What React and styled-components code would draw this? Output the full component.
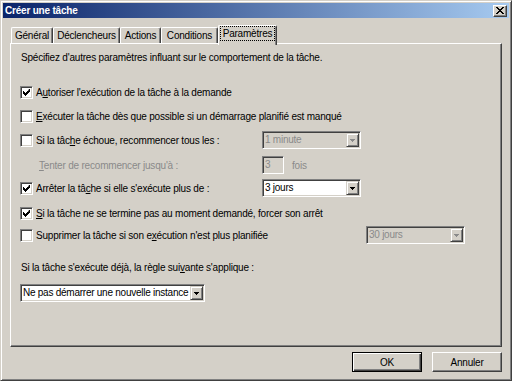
import React from "react";
import styled, { createGlobalStyle } from "styled-components";

const GlobalStyle = createGlobalStyle`
  html, body {
    margin: 0;
    padding: 0;
    background: #d4d0c8;
  }
  body {
    font-family: "Liberation Sans", Arial, sans-serif;
    font-size: 10px;
    letter-spacing: -0.2px;
    color: #000;
  }
`;

const Window = styled.div`
  box-sizing: border-box;
  width: 512px;
  height: 381px;
  display: flex;
  flex-direction: column;
  background: #d4d0c8;
  border: 1px solid;
  border-color: #d4d0c8 #404040 #404040 #d4d0c8;
  box-shadow: inset 1px 1px #fff, inset -1px -1px #808080;
  padding: 2px;
`;

const TitleBar = styled.div`
  height: 15px;
  flex: none;
  display: flex;
  align-items: center;
  justify-content: space-between;
  padding: 0 2px 0 2px;
  background: linear-gradient(to right, #0a246a, #a6caf0);
`;

const Title = styled.span`
  color: #fff;
  font-weight: bold;
`;

const CloseButton = styled.span`
  box-sizing: border-box;
  width: 14px;
  height: 12px;
  display: flex;
  align-items: center;
  justify-content: center;
  background: #d4d0c8;
  border: 1px solid;
  border-color: #fff #404040 #404040 #fff;
  box-shadow: inset -1px -1px #808080;
`;

const Body = styled.div`
  flex: 1;
  display: flex;
  flex-direction: column;
  padding: 7px 7px 0 7px;
`;

const TabStrip = styled.div`
  height: 18px;
  display: flex;
  align-items: flex-end;
  padding-left: 1px;
`;

const Tab = styled.div`
  box-sizing: border-box;
  width: ${(p) => p.$w}px;
  height: ${(p) => (p.$active ? 20 : 16)}px;
  margin-bottom: ${(p) => (p.$active ? -2 : 0)}px;
  position: relative;
  z-index: ${(p) => (p.$active ? 1 : 0)};
  display: flex;
  align-items: ${(p) => (p.$active ? "flex-start" : "center")};
  justify-content: center;
  padding: ${(p) => (p.$active ? "0 1px 4px 1px" : "0")};
  background: #d4d0c8;
  border-top: 1px solid #fff;
  border-left: 1px solid #fff;
  border-right: 1px solid #404040;
  border-radius: 2px 2px 0 0;
  box-shadow: inset -1px 0 #808080;
  white-space: nowrap;
`;

const TabLabel = styled.span`
  box-sizing: border-box;
  flex: 1;
  height: 15px;
  display: flex;
  align-items: center;
  justify-content: center;
  border: 1px dotted #000;
`;

const Panel = styled.div`
  box-sizing: border-box;
  height: 304px;
  display: flex;
  flex-direction: column;
  border: 1px solid;
  border-color: #fff #404040 #404040 #fff;
  box-shadow: inset -1px -1px #808080;
  padding: 3px 0 0 9px;
`;

const Row = styled.div`
  display: flex;
  align-items: center;
  height: 20px;
  flex: none;
  margin-top: ${(p) => p.$mt || 0}px;
  padding-left: ${(p) => p.$indent || 0}px;
  white-space: nowrap;
`;

const Text = styled.span`
  color: ${(p) => (p.$disabled ? "#8a8a8a" : "#000")};
  margin-left: ${(p) => p.$ml || 0}px;
`;

const Label = styled.span`
  flex: none;
  width: ${(p) => (p.$w ? `${p.$w}px` : "auto")};
  color: ${(p) => (p.$disabled ? "#8a8a8a" : "#000")};
`;

const U = styled.span`
  text-decoration: underline;
`;

const Box = styled.span`
  box-sizing: border-box;
  width: 13px;
  height: 13px;
  flex: none;
  margin-right: 3px;
  display: flex;
  align-items: center;
  justify-content: center;
  background: #fff;
  border: 1px solid;
  border-color: #808080 #fff #fff #808080;
  box-shadow: inset 1px 1px #404040, inset -1px -1px #d4d0c8;
`;

const Field = styled.div`
  box-sizing: border-box;
  width: ${(p) => p.$w}px;
  height: 18px;
  flex: none;
  display: flex;
  align-items: stretch;
  padding: 1px;
  background: ${(p) => (p.$disabled ? "#d4d0c8" : "#fff")};
  color: ${(p) => (p.$disabled ? "#8a8a8a" : "#000")};
  border: 1px solid;
  border-color: #808080 #fff #fff #808080;
  box-shadow: inset 1px 1px #404040, inset -1px -1px #d4d0c8;
`;

const FieldText = styled.span`
  flex: 1;
  min-width: 0;
  padding-left: 1px;
  line-height: 14px;
  letter-spacing: -0.25px;
  overflow: hidden;
`;

const DropButton = styled.span`
  box-sizing: border-box;
  width: 13px;
  flex: none;
  display: flex;
  align-items: center;
  justify-content: center;
  background: #d4d0c8;
  border: 1px solid;
  border-color: #d4d0c8 #404040 #404040 #d4d0c8;
  box-shadow: inset 1px 1px #fff, inset -1px -1px #808080;
`;

const Footer = styled.div`
  display: flex;
  justify-content: flex-end;
  gap: 10px;
  padding: 5px 0 6px 0;
`;

const Button = styled.div`
  box-sizing: border-box;
  width: 70px;
  height: 20px;
  display: flex;
  align-items: center;
  justify-content: center;
  background: #d4d0c8;
  border: 1px solid;
  border-color: ${(p) => (p.$default ? "#000" : "#fff #404040 #404040 #fff")};
  box-shadow: ${(p) =>
    p.$default
      ? "inset 1px 1px #fff, inset -1px -1px #404040, inset -2px -2px #808080"
      : "inset -1px -1px #808080"};
`;

function CheckBox({ checked }) {
  return (
    <Box>
      {checked && (
        <svg width="7" height="7" viewBox="0 0 7 7">
          <path
            d="M6 0h1v3h-1v1h-1v1h-1v1h-1v1h-1v-1h-1v-1h-1v-3h1v1h1v1h1v-1h1v-1h1z"
            fill="#000"
          />
        </svg>
      )}
    </Box>
  );
}

function Combo({ value, width, disabled }) {
  const c = disabled ? "#8a8a8a" : "#000";
  return (
    <Field $w={width} $disabled={disabled}>
      <FieldText>{value}</FieldText>
      <DropButton>
        <svg width="5" height="3" viewBox="0 0 5 3">
          <path d="M0 0h5v1h-1v1h-1v1h-1v-1h-1v-1h-1z" fill={c} />
        </svg>
      </DropButton>
    </Field>
  );
}

const tabs = [
  { label: "Général", w: 42 },
  { label: "Déclencheurs", w: 67 },
  { label: "Actions", w: 41 },
  { label: "Conditions", w: 57 },
  { label: "Paramètres", w: 59, active: true },
];

export default function App() {
  return (
    <>
      <GlobalStyle />
      <Window>
        <TitleBar>
          <Title>Créer une tâche</Title>
          <CloseButton>
            <svg width="8" height="7" viewBox="0 0 8 7">
              <path
                d="M0 0h2v1h1v1h2v-1h1v-1h2v1h-1v1h-1v1h-1v1h1v1h1v1h1v1h-2v-1h-1v-1h-2v1h-1v1h-2v-1h1v-1h1v-1h1v-1h-1v-1h-1v-1h-1z"
                fill="#000"
              />
            </svg>
          </CloseButton>
        </TitleBar>
        <Body>
          <TabStrip>
            {tabs.map((t) => (
              <Tab key={t.label} $w={t.w} $active={t.active}>
                {t.active ? <TabLabel>{t.label}</TabLabel> : t.label}
              </Tab>
            ))}
          </TabStrip>
          <Panel>
            <Row $mt={0}>
              <Text $ml={1}>
                Spécifiez d'autres paramètres influant sur le comportement de la tâche.
              </Text>
            </Row>
            <Row $mt={15}>
              <CheckBox checked />
              <Label>
                A<U>u</U>toriser l'exécution de la tâche à la demande
              </Label>
            </Row>
            <Row $mt={4}>
              <CheckBox />
              <Label>
                <U>E</U>xécuter la tâche dès que possible si un démarrage planifié est manqué
              </Label>
            </Row>
            <Row $mt={4}>
              <CheckBox />
              <Label $w={226}>
                Si la tâc<U>h</U>e échoue, recommencer tous les :
              </Label>
              <Combo value="1 minute" width={99} disabled />
            </Row>
            <Row $mt={5} $indent={19}>
              <Label $w={223} $disabled>
                <U>T</U>enter de recommencer jusqu'à :
              </Label>
              <Field $w={22} $disabled>
                <FieldText>3</FieldText>
              </Field>
              <Text $ml={8} $disabled>
                fois
              </Text>
            </Row>
            <Row $mt={3}>
              <CheckBox checked />
              <Label $w={226}>
                Arrêter la tâ<U>c</U>he si elle s'exécute plus de :
              </Label>
              <Combo value="3 jours" width={99} />
            </Row>
            <Row $mt={5}>
              <CheckBox checked />
              <Label>
                <U>S</U>i la tâche ne se termine pas au moment demandé, forcer son arrêt
              </Label>
            </Row>
            <Row $mt={2}>
              <CheckBox />
              <Label $w={330}>
                Supprimer la tâche si son e<U>x</U>écution n'est plus planifiée
              </Label>
              <Combo value="30 jours" width={99} disabled />
            </Row>
            <Row $mt={12}>
              <Text $ml={1}>
                Si la tâche s'exécute déjà, la règle sui<U>v</U>ante s'applique :
              </Text>
            </Row>
            <Row $mt={6}>
              <Combo value="Ne pas démarrer une nouvelle instance" width={185} />
            </Row>
          </Panel>
          <Footer>
            <Button $default>OK</Button>
            <Button>Annuler</Button>
          </Footer>
        </Body>
      </Window>
    </>
  );
}
